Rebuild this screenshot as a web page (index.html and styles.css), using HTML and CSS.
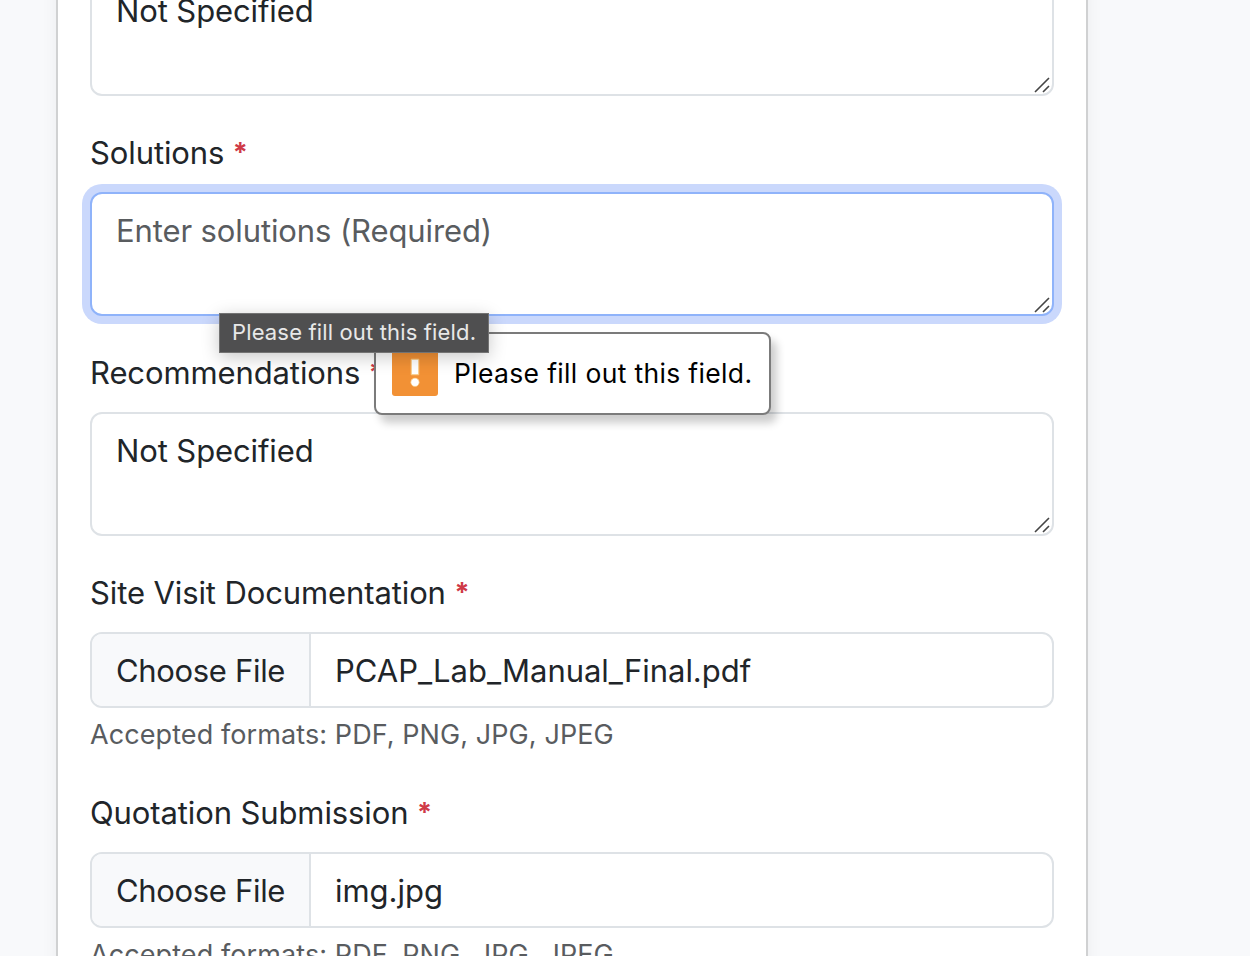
FILE: index.html
```
<!DOCTYPE html>
<html lang="en">
<head>
<meta charset="utf-8">
<title>Site Visit Form</title>
<link rel="stylesheet" href="styles.css">
</head>
<body>
<main class="card">
  <section class="field first">
    <div class="textarea">Not Specified
      <svg class="grip" viewBox="0 0 16 16"><path d="M1 15 15 1M9 15l6-6"/></svg>
    </div>
  </section>
  <section class="field">
    <div class="label">Solutions <span class="required">*</span></div>
    <div class="textarea focused"><span class="placeholder">Enter solutions (Required)</span>
      <svg class="grip" viewBox="0 0 16 16"><path d="M1 15 15 1M9 15l6-6"/></svg>
    </div>
  </section>
  <section class="field">
    <div class="label">Recommendations <span class="required">*</span></div>
    <div class="textarea">Not Specified
      <svg class="grip" viewBox="0 0 16 16"><path d="M1 15 15 1M9 15l6-6"/></svg>
    </div>
  </section>
  <section class="field upload">
    <div class="label">Site Visit Documentation <span class="required">*</span></div>
    <div class="file"><span class="choose">Choose File</span><span class="filename">PCAP_Lab_Manual_Final.pdf</span></div>
    <div class="help">Accepted formats: PDF, PNG, JPG, JPEG</div>
  </section>
  <section class="field upload">
    <div class="label">Quotation Submission <span class="required">*</span></div>
    <div class="file"><span class="choose">Choose File</span><span class="filename">img.jpg</span></div>
    <div class="help">Accepted formats: PDF, PNG, JPG, JPEG</div>
  </section>
</main>
<div class="bubble">
  <svg class="warning" viewBox="0 0 46 46"><rect width="46" height="46" rx="3" fill="#f29135"/><path d="M19.2 9.2h7.6v15.6h-7.6z" fill="#fff" stroke="#f8c577"/><circle cx="23" cy="32.3" r="4.2" fill="#fff" stroke="#f8c577" stroke-width=".7"/></svg>
  <span>Please fill out this field.</span>
</div>
<div class="tooltip">Please fill out this field.</div>
</body>
</html>
```
FILE: styles.css
```
* { box-sizing: border-box; }
body {
  margin: 0;
  height: 956px;
  overflow: hidden;
  background: #f8f9fb;
  color: #212529;
  font: 430 31px/48px Inter, "Liberation Sans", sans-serif;
  letter-spacing: -.11px;
  position: relative;
}
.card {
  width: 1032px;
  height: 1040px;
  margin: -60px 0 0 56px;
  padding: 32px;
  border: 2px solid #d0d1d2;
  background: #fff;
  box-shadow: 0 4px 16px rgba(0, 0, 0, .05);
}
.field { margin-bottom: 32px; }
.first { margin-top: -2px; }
.upload { margin-bottom: 30px; }
.label { height: 48px; padding-top: 1px; margin-bottom: 16px; white-space: nowrap; }
.required { color: #cf3a47; font-size: 27px; font-weight: 650; line-height: 1; position: relative; top: -2px; }
.textarea {
  position: relative;
  width: 964px;
  height: 124px;
  padding: 13px 24px;
  border: 2px solid #dee2e6;
  border-radius: 12px;
  background: #fff;
}
.focused { border-color: #8fb3fa; box-shadow: 0 0 0 8px #cad8fc; }
.placeholder { color: #595c5f; }
.grip {
  position: absolute;
  right: 2px;
  bottom: 1px;
  width: 16px;
  height: 16px;
  fill: none;
  stroke: #454545;
  stroke-width: 1.6;
}
.file {
  display: flex;
  width: 964px;
  height: 76px;
  border: 2px solid #dee2e6;
  border-radius: 12px;
  overflow: hidden;
  line-height: 73px;
}
.choose {
  width: 219px;
  padding-left: 24px;
  border-right: 2px solid #dee2e6;
  background: #f8f9fb;
  letter-spacing: -.33px;
}
.filename { padding-left: 24px; letter-spacing: -.03px; }
.help { margin-top: 6px; height: 44px; line-height: 42px; font-size: 27px; letter-spacing: .09px; color: #595c5f; }
.bubble {
  position: absolute;
  left: 374px;
  top: 332px;
  width: 397px;
  height: 83px;
  display: flex;
  align-items: center;
  gap: 16px;
  padding: 0 16px 2px;
  border: 2px solid #7b7b7b;
  border-radius: 8px;
  background: #fff;
  box-shadow: 6px 8px 8px rgba(0, 0, 0, .2);
  color: #000;
  font-size: 26.5px;
  letter-spacing: .34px;
  white-space: nowrap;
}
.warning { width: 46px; height: 46px; flex: none; }
.tooltip {
  position: absolute;
  left: 219px;
  top: 313px;
  width: 270px;
  height: 40px;
  padding-left: 12px;
  border: 1px solid #737373;
  background: #4f4f50;
  box-shadow: 0 4px 18px rgba(0, 0, 0, .22);
  color: #e8e8e8;
  font-size: 22px;
  line-height: 37px;
  letter-spacing: .15px;
  white-space: nowrap;
}
```
